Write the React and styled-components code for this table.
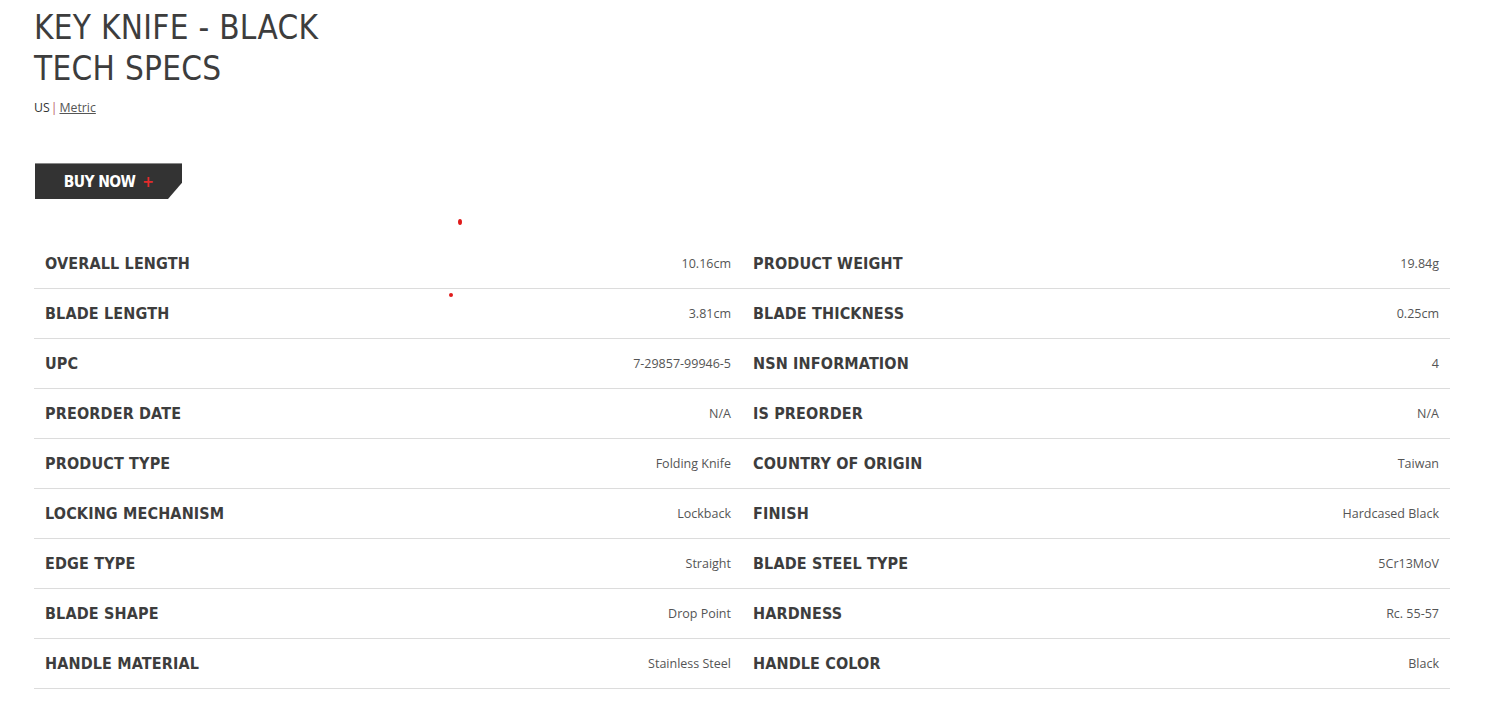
import React from "react";
import styled, { createGlobalStyle } from "styled-components";

const Global = createGlobalStyle`
  html, body { margin: 0; padding: 0; background: #fff; }
  body { font-family: "Open Sans", "Liberation Sans", sans-serif; color: #444; }
`;

const Page = styled.div`
  padding: 7px 42px 0 34px;
  position: relative;
`;

const Title = styled.h1`
  margin: 0;
  font-family: "DejaVu Sans Condensed", "DejaVu Sans", sans-serif;
  font-weight: 400;
  font-size: 33px;
  line-height: 41px;
  letter-spacing: 0.3px;
  color: #3d3d3d;
`;

const Units = styled.div`
  margin-top: 10px;
  font-size: 12.3px;
  line-height: 18px;
  color: #333;
`;

const Sep = styled.span`
  color: #b66;
  margin: 0 2px 0 1px;
`;

const UnitLink = styled.a`
  color: #555;
  text-decoration: underline;
`;

const BuyButton = styled.button`
  margin-top: 46px;
  margin-left: 1px;
  width: 147px;
  height: 36px;
  border: none;
  border-top: 1px solid #888;
  background: #333;
  color: #fff;
  font-family: "DejaVu Sans Condensed", "DejaVu Sans", sans-serif;
  font-weight: 700;
  font-size: 15.5px;
  letter-spacing: -0.6px;
  clip-path: polygon(0 0, 100% 0, 100% 55%, calc(100% - 14px) 100%, 0 100%);
  cursor: pointer;
  display: flex;
  align-items: center;
  justify-content: center;
  padding: 0;
`;

const Plus = styled.span`
  color: #e52b2b;
  margin-left: 7px;
`;

const Specs = styled.div`
  margin-top: 40px;
  display: grid;
  grid-template-columns: 1fr 1fr;
  width: 1416px;
`;

const Row = styled.div`
  display: flex;
  align-items: center;
  justify-content: space-between;
  height: 49px;
  border-bottom: 1px solid #dcdcdc;
  padding: 0 11px;
`;

const Label = styled.span`
  font-family: "DejaVu Sans Condensed", "DejaVu Sans", sans-serif;
  font-weight: 700;
  font-size: 16px;
  letter-spacing: 0.15px;
  color: #3d3d3d;
  text-transform: uppercase;
`;

const Value = styled.span`
  font-size: 12.5px;
  color: #555;
`;

const Dot = styled.span`
  position: absolute;
  background: #e01b1b;
  border-radius: 50%;
`;

const specs = [
  ["Overall Length", "10.16cm", "Product Weight", "19.84g"],
  ["Blade Length", "3.81cm", "Blade Thickness", "0.25cm"],
  ["UPC", "7-29857-99946-5", "NSN Information", "4"],
  ["Preorder Date", "N/A", "Is Preorder", "N/A"],
  ["Product Type", "Folding Knife", "Country of Origin", "Taiwan"],
  ["Locking Mechanism", "Lockback", "Finish", "Hardcased Black"],
  ["Edge Type", "Straight", "Blade Steel Type", "5Cr13MoV"],
  ["Blade Shape", "Drop Point", "Hardness", "Rc. 55-57"],
  ["Handle Material", "Stainless Steel", "Handle Color", "Black"],
];

export default function App() {
  return (
    <>
      <Global />
      <Page>
        <Title>
          KEY KNIFE - BLACK
          <br />
          TECH SPECS
        </Title>
        <Units>
          US<Sep>|</Sep>
          <UnitLink>Metric</UnitLink>
        </Units>
        <BuyButton>
          BUY NOW<Plus>+</Plus>
        </BuyButton>
        <Specs>
          {specs.map(([l1, v1, l2, v2]) => (
            <React.Fragment key={l1}>
              <Row>
                <Label>{l1}</Label>
                <Value>{v1}</Value>
              </Row>
              <Row>
                <Label>{l2}</Label>
                <Value>{v2}</Value>
              </Row>
            </React.Fragment>
          ))}
        </Specs>
        <Dot style={{ left: 458, top: 219, width: 4, height: 6 }} />
        <Dot style={{ left: 449, top: 293, width: 4, height: 4 }} />
      </Page>
    </>
  );
}
